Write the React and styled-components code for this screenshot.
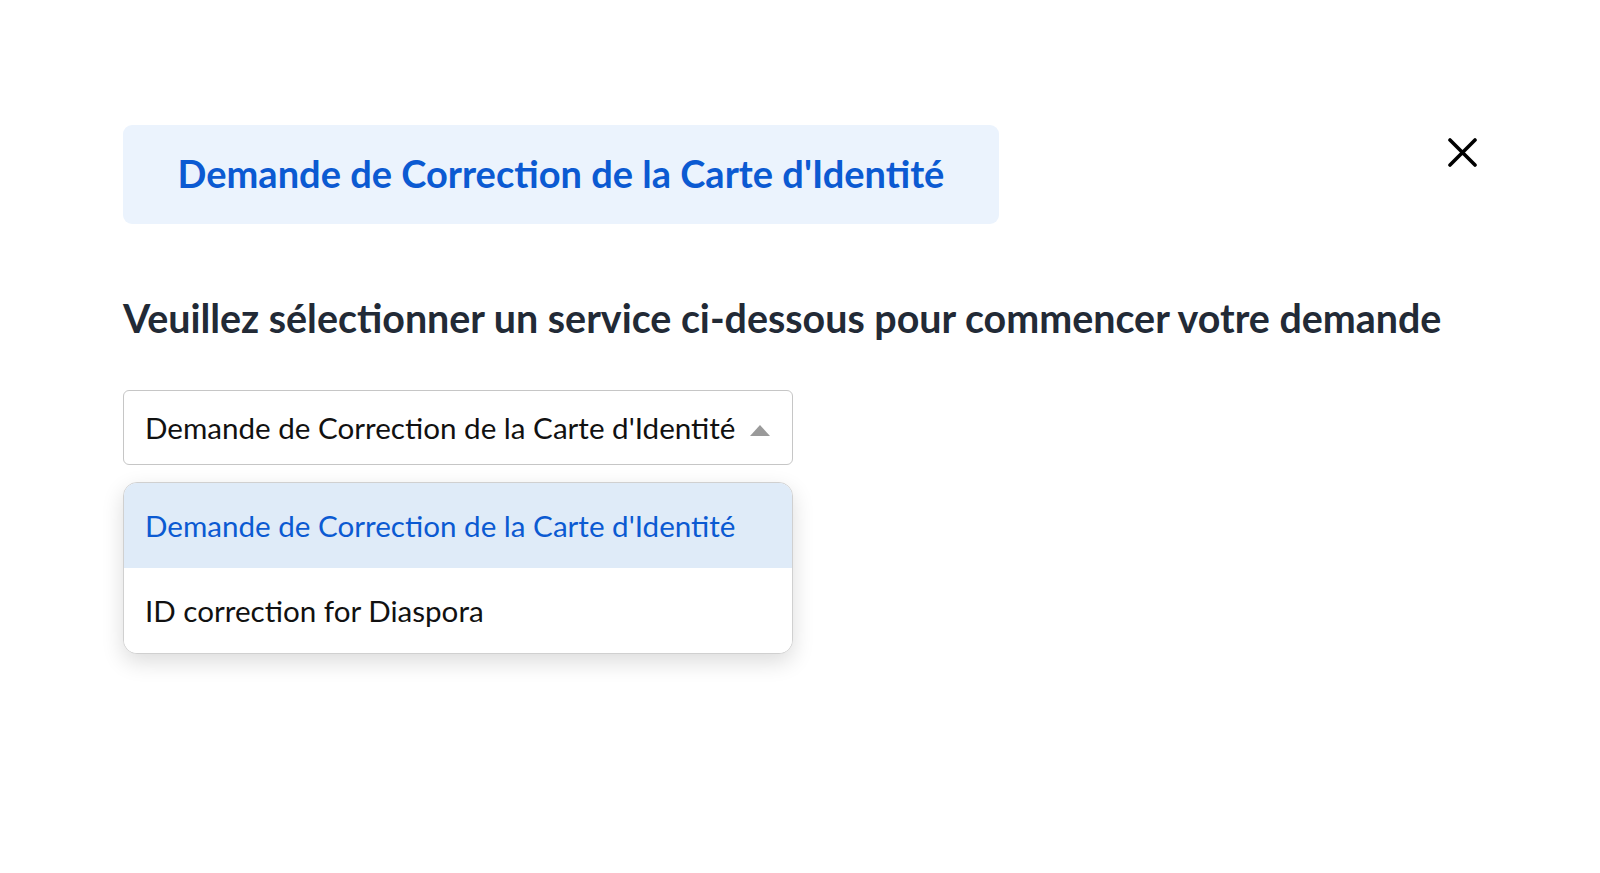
import React, { useState } from 'react'
import styled, { createGlobalStyle } from 'styled-components'

const GlobalStyle = createGlobalStyle`
  html, body {
    margin: 0;
    padding: 0;
    background: #fff;
  }
  body {
    font-family: 'Lato', 'Noto Sans', sans-serif;
  }
`

const Page = styled.div`
  width: 1600px;
  height: 873px;
  box-sizing: border-box;
  padding: 125px 123px 0 123px;
  background: #fff;
`

const TopRow = styled.div`
  display: flex;
  justify-content: space-between;
  align-items: flex-start;
`

const TitleBox = styled.div`
  width: 876px;
  height: 99px;
  box-sizing: border-box;
  padding-bottom: 4px;
  display: flex;
  align-items: center;
  justify-content: center;
  background: #ebf3fd;
  border-radius: 9px;

  h1 {
    margin: 0;
    font-size: 38px;
    font-weight: 700;
    color: #0b5ad2;
    letter-spacing: 0;
  }
`

const CloseButton = styled.button`
  margin-top: 13px;
  width: 29px;
  height: 29px;
  padding: 0;
  border: none;
  background: none;
  cursor: pointer;
  display: flex;
  align-items: center;
  justify-content: center;
`

const Prompt = styled.h2`
  margin: 71px 0 0 0;
  font-size: 39.4px;
  font-weight: 700;
  color: #222a36;
  line-height: 46px;
  white-space: nowrap;
`

const SelectWrap = styled.div`
  margin-top: 49px;
  width: 670px;
`

const SelectBox = styled.div`
  height: 75px;
  box-sizing: border-box;
  border: 1.5px solid #c6c6c6;
  border-radius: 6px;
  display: flex;
  align-items: center;
  padding: 0 22px 0 21px;
  font-size: 29.6px;
  color: #111;
  cursor: pointer;

  span {
    flex: 1;
  }
`

const Caret = styled.div`
  width: 0;
  height: 0;
  border-left: 10.5px solid transparent;
  border-right: 10.5px solid transparent;
  border-bottom: 11px solid #9a9a9a;
  margin-top: 6px;
`

const Menu = styled.ul`
  list-style: none;
  margin: 17px 0 0 0;
  padding: 0;
  border: 1.5px solid #d0d0d0;
  border-radius: 14px;
  overflow: hidden;
  box-shadow: 0 8px 22px rgba(0, 0, 0, 0.14);
  background: #fff;
`

const Option = styled.li`
  height: 85px;
  display: flex;
  align-items: center;
  padding: 0 21px;
  font-size: 29.6px;
  color: ${(p) => (p.active ? '#0b5ad2' : '#111')};
  background: ${(p) => (p.active ? '#dfebf8' : '#fff')};
  cursor: pointer;
`

const options = [
  "Demande de Correction de la Carte d'Identité",
  'ID correction for Diaspora',
]

const App = () => {
  const [selected, setSelected] = useState(0)

  return (
    <Page>
      <GlobalStyle />
      <TopRow>
        <TitleBox>
          <h1>Demande de Correction de la Carte d'Identité</h1>
        </TitleBox>
        <CloseButton aria-label="Fermer">
          <svg width="29" height="29" viewBox="0 0 29 29">
            <path d="M2 2 L27 27 M27 2 L2 27" stroke="#000" strokeWidth="3.6" strokeLinecap="round" />
          </svg>
        </CloseButton>
      </TopRow>
      <Prompt>Veuillez sélectionner un service ci-dessous pour commencer votre demande</Prompt>
      <SelectWrap>
        <SelectBox>
          <span>{options[selected]}</span>
          <Caret />
        </SelectBox>
        <Menu>
          {options.map((opt, i) => (
            <Option key={opt} active={i === selected} onClick={() => setSelected(i)}>
              {opt}
            </Option>
          ))}
        </Menu>
      </SelectWrap>
    </Page>
  )
}

export default App
